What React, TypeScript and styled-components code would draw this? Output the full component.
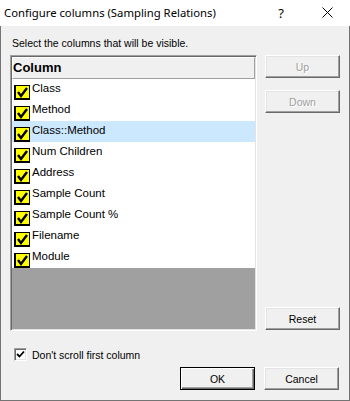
import React from 'react';
import styled, { createGlobalStyle, css } from 'styled-components';

const GlobalStyle = createGlobalStyle`
  html, body {
    margin: 0;
    padding: 0;
    background: #ffffff;
  }
  * {
    box-sizing: border-box;
  }
`;

const COLUMNS = [
  'Class',
  'Method',
  'Class::Method',
  'Num Children',
  'Address',
  'Sample Count',
  'Sample Count %',
  'Filename',
  'Module',
];

const SELECTED = 2;

const YellowCheck: React.FC = () => (
  <svg width="16" height="15" viewBox="0 0 16 15" shapeRendering="crispEdges">
    <rect x="0" y="0" width="16" height="15" fill="#000" />
    <rect x="2" y="1" width="13" height="12" fill="#ffff00" />
    <path
      d="M4 7 L7 11 L13 3"
      stroke="#000"
      strokeWidth="2.4"
      fill="none"
      shapeRendering="geometricPrecision"
    />
  </svg>
);

const SmallCheck: React.FC = () => (
  <svg width="9" height="9" viewBox="0 0 9 9">
    <path d="M1 4 L3.5 6.5 L8 1.5" stroke="#000" strokeWidth="1.8" fill="none" />
  </svg>
);

const CloseGlyph: React.FC = () => (
  <svg width="11" height="11" viewBox="0 0 11 11">
    <path d="M0.5 0.5 L10.5 10.5 M10.5 0.5 L0.5 10.5" stroke="#000" strokeWidth="1" fill="none" />
  </svg>
);

const App: React.FC = () => {
  return (
    <>
      <GlobalStyle />
      <Dialog>
        <TitleBar>
          <TitleText>Configure columns (Sampling Relations)</TitleText>
          <CaptionButton>?</CaptionButton>
          <CaptionButton>
            <CloseGlyph />
          </CaptionButton>
        </TitleBar>
        <Body>
          <Prompt>Select the columns that will be visible.</Prompt>
          <MainRow>
            <ListBox>
              <ListHeader>Column</ListHeader>
              {COLUMNS.map((name, i) => (
                <ListRow key={name} $selected={i === SELECTED}>
                  <CheckSlot>
                    <YellowCheck />
                  </CheckSlot>
                  <RowText>{name}</RowText>
                </ListRow>
              ))}
              <EmptyArea />
            </ListBox>
            <SideButtons>
              <PushButton disabled>Up</PushButton>
              <PushButton disabled>Down</PushButton>
              <Spacer />
              <PushButton>Reset</PushButton>
            </SideButtons>
          </MainRow>
          <CheckRow>
            <CheckBox>
              <SmallCheck />
            </CheckBox>
            <CheckLabel>Don't scroll first column</CheckLabel>
          </CheckRow>
          <ButtonRow>
            <PushButton $default>OK</PushButton>
            <PushButton>Cancel</PushButton>
          </ButtonRow>
        </Body>
      </Dialog>
    </>
  );
};

const Dialog = styled.div`
  width: 350px;
  height: 401px;
  display: flex;
  flex-direction: column;
  font-family: 'Liberation Sans', Arial, sans-serif;
  color: #000;
`;

const TitleBar = styled.div`
  height: 26px;
  background: #ffffff;
  display: flex;
  align-items: center;
  padding-left: 4px;
`;

const TitleText = styled.div`
  flex: 1;
  font-family: 'Noto Sans', 'Liberation Sans', sans-serif;
  font-size: 11.3px;
  margin-top: -1px;
`;

const CaptionButton = styled.div`
  width: 46px;
  height: 26px;
  display: flex;
  align-items: center;
  justify-content: center;
  font-family: 'Noto Sans', sans-serif;
  font-size: 13px;
  margin-top: -1px;
`;

const Body = styled.div`
  flex: 1;
  background: #f0f0f0;
  border: 1px solid #747474;
  border-top: none;
  padding: 10px 9px 10px 9px;
  display: flex;
  flex-direction: column;
  font-size: 10.5px;
`;

const Prompt = styled.div`
  height: 14px;
  line-height: 14px;
  padding-left: 2px;
  margin-bottom: 5px;
`;

const MainRow = styled.div`
  display: grid;
  grid-template-columns: 247px 75px;
  column-gap: 8px;
  height: 276px;
`;

const ListBox = styled.div`
  display: flex;
  flex-direction: column;
  border-style: solid;
  border-width: 1px;
  border-color: #a0a0a0 #ffffff #ffffff #a0a0a0;
  box-shadow: inset 1px 1px #696969, inset -1px -1px #e3e3e3;
  padding: 1px;
  overflow: hidden;
`;

const ListHeader = styled.div`
  height: 22px;
  flex: none;
  background: #f0f0f0;
  border-style: solid;
  border-width: 1px;
  border-color: #ffffff #a0a0a0 #a0a0a0 #ffffff;
  font-size: 13px;
  font-weight: bold;
  line-height: 20px;
  padding-left: 0px;
`;

const ListRow = styled.div<{ $selected?: boolean }>`
  height: 21px;
  flex: none;
  display: flex;
  align-items: center;
  background: ${(p) => (p.$selected ? '#cce8ff' : '#ffffff')};
  padding-left: 2px;
`;

const CheckSlot = styled.div`
  align-self: flex-end;
  height: 15px;
  display: flex;
`;

const RowText = styled.span`
  font-size: 11.5px;
  margin-left: 2px;
  margin-top: -3px;
`;

const EmptyArea = styled.div`
  flex: 1;
  background: #a0a0a0;
`;

const SideButtons = styled.div`
  display: flex;
  flex-direction: column;
  gap: 12px;
  padding-bottom: 1px;
`;

const Spacer = styled.div`
  flex: 1;
`;

const PushButton = styled.button<{ $default?: boolean }>`
  width: 75px;
  height: 23px;
  flex: none;
  padding: 0;
  margin: 0;
  background: #f0f0f0;
  font-family: 'Liberation Sans', Arial, sans-serif;
  font-size: 10.5px;
  color: #000;
  border-style: solid;
  border-width: 1px;
  border-color: #ffffff #696969 #696969 #ffffff;
  box-shadow: inset -1px -1px #a0a0a0, inset 1px 1px #e3e3e3;

  &:disabled {
    color: #a0a0a0;
    text-shadow: 1px 1px #ffffff;
  }

  ${(p) =>
    p.$default &&
    css`
      border-color: #000;
      box-shadow: inset 1px 1px #ffffff, inset -1px -1px #696969, inset -2px -2px #a0a0a0;
    `}
`;

const CheckRow = styled.div`
  margin-top: 17px;
  height: 13px;
  display: flex;
  align-items: center;
  padding-left: 4px;
`;

const CheckBox = styled.div`
  width: 13px;
  height: 13px;
  background: #ffffff;
  border-style: solid;
  border-width: 1px;
  border-color: #a0a0a0 #ffffff #ffffff #a0a0a0;
  box-shadow: inset 1px 1px #696969, inset -1px -1px #e3e3e3;
  display: flex;
  align-items: center;
  justify-content: center;
`;

const CheckLabel = styled.span`
  margin-left: 5px;
`;

const ButtonRow = styled.div`
  margin-top: 6px;
  display: flex;
  justify-content: flex-end;
  gap: 9px;
  padding-right: 1px;
`;

export default App;
